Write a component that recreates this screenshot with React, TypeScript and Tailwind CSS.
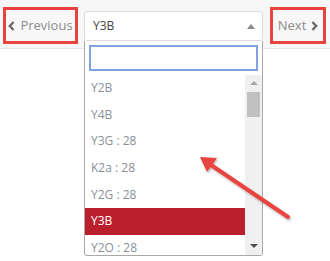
import { useState } from 'react';

const items = ['Y2B', 'Y4B', 'Y3G : 28', 'K2a : 28', 'Y2G : 28', 'Y3B', 'Y2O : 28'];

function Chevron({ dir }: { dir: 'left' | 'right' }) {
    return (
        <svg width="7" height="10" viewBox="0 0 7 10" className="shrink-0">
            <polyline
                points={dir === 'left' ? '5.6,1 1.8,5 5.6,9' : '1.4,1 5.2,5 1.4,9'}
                fill="none"
                stroke="#6a6a6a"
                strokeWidth="2.4"
            />
        </svg>
    );
}

export default function App() {
    const [selected] = useState('Y3B');

    return (
        <div className="relative w-[330px] h-[261px] bg-white overflow-hidden font-['Open_Sans','Liberation_Sans',sans-serif]">
            {/* Top toolbar */}
            <div className="flex items-start h-[49px] pt-[7px] pl-[3px] gap-[6px] bg-[#f7f7f7] border-b border-[#e6e6e6]">
                <button className="flex items-center justify-center gap-[5px] w-[75px] h-[37px] border-[3px] border-[#e8443f] text-[13px] text-[#8c8c8c]">
                    <Chevron dir="left" />
                    <span>Previous</span>
                </button>

                <div className="mt-[4px] flex items-center justify-between w-[179px] h-[30px] pl-[8px] pr-[7px] bg-white border border-[#dcdcdc] rounded-[3px] text-[12px] text-[#444]">
                    <span>{selected}</span>
                    <span className="w-0 h-0 border-l-[4px] border-r-[4px] border-b-[5px] border-l-transparent border-r-transparent border-b-[#888]" />
                </div>

                <button className="ml-[1px] flex items-center justify-center gap-[5px] w-[56px] h-[37px] border-[3px] border-[#e8443f] text-[13px] text-[#8c8c8c]">
                    <span>Next</span>
                    <Chevron dir="right" />
                </button>
            </div>

            {/* Open dropdown */}
            <div className="absolute left-[84px] top-[41px] w-[179px] h-[215px] bg-white border border-t-0 border-[#a9a9a9] rounded-b-[3px] flex flex-col">
                <div className="px-[4px] pt-[4px] pb-[4px] shrink-0">
                    <div className="h-[26px] border-2 border-[#7ea3e2] bg-white" />
                </div>
                <div className="flex flex-1 min-h-0">
                    <ul className="flex-1 overflow-hidden">
                        {items.map((it) => (
                            <li
                                key={it}
                                className={`h-[26.6px] flex items-center pl-[6px] text-[12px] ${
                                    it === selected ? 'bg-[#bb1f2c] text-white' : 'text-[#8a8f99]'
                                }`}
                            >
                                {it}
                            </li>
                        ))}
                    </ul>
                    <div className="w-[17px] bg-[#f0f0f0] flex flex-col items-center">
                        <span className="mt-[6px] w-0 h-0 border-l-[4px] border-r-[4px] border-b-[4px] border-l-transparent border-r-transparent border-b-[#a3a3a3]" />
                        <span className="mt-[7px] w-[13px] h-[25px] bg-[#c1c1c1]" />
                        <span className="mt-auto mb-[7px] w-0 h-0 border-l-[4px] border-r-[4px] border-t-[4px] border-l-transparent border-r-transparent border-t-[#505050]" />
                    </div>
                </div>
            </div>

            {/* Annotation arrow */}
            <svg className="absolute left-0 top-0 pointer-events-none" width="330" height="261">
                <defs>
                    <filter id="sh" x="-20%" y="-20%" width="140%" height="140%">
                        <feDropShadow dx="1" dy="1.5" stdDeviation="1.2" floodColor="#000" floodOpacity="0.3" />
                    </filter>
                </defs>
                <g filter="url(#sh)">
                    <line x1="288" y1="217" x2="208" y2="163" stroke="#e8443f" strokeWidth="4" strokeLinecap="round" />
                    <polygon points="200,157 217,158 207,172" fill="#e8443f" />
                </g>
            </svg>
        </div>
    );
}
